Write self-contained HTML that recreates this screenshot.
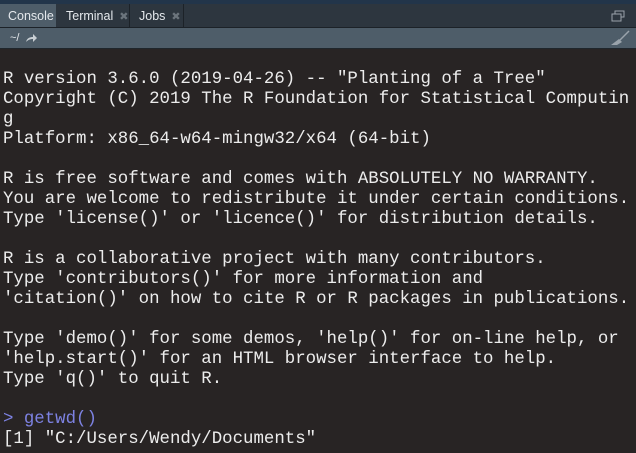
<!DOCTYPE html>
<html><head><style>
body{margin:0;width:636px;height:453px;overflow:hidden;background:#282424;font-family:"Liberation Sans",sans-serif}
.top{position:absolute;left:0;top:0;width:636px;height:4px;background:#22354a}
.tabs{position:absolute;left:0;top:4px;width:636px;height:23px;background:#2d363f;border-bottom:1px solid #1c2228}
.tab{position:absolute;top:0;height:23px;font-size:12.5px;color:#e4e8ec;line-height:24px;padding-left:8px;box-sizing:border-box;border-right:1px solid #1c2228}
.x{color:#6b747c;font-size:11px;margin-left:6px}
.bar{position:absolute;left:0;top:28px;width:636px;height:20px;background:#4e5d69;border-bottom:1px solid #1f262c}
.con{position:absolute;left:3px;top:70px;margin:0;font-family:"Liberation Mono",monospace;font-size:17.4px;line-height:20px;color:#ececec;white-space:pre}
.p{color:#7d82e2}
</style></head><body>
<div class="top"></div>
<div class="tabs">
<div class="tab" style="left:0;width:56px;background:#4e5d69;border-right:none">Console</div>
<div class="tab" style="left:57px;width:73px;padding-left:9px">Terminal<span class="x">✖</span></div>
<div class="tab" style="left:130px;width:54px;padding-left:9px">Jobs<span class="x">✖</span></div>
<svg style="position:absolute;left:611px;top:6px" width="14" height="12"><rect x="4" y="1" width="9" height="6" fill="none" stroke="#9aa3ab"/><rect x="1" y="4" width="9" height="7" fill="#2d363f" stroke="#9aa3ab"/></svg>
</div>
<div class="bar">
<span style="position:absolute;left:10px;top:4px;font-size:11px;color:#e4e8ec">~/</span>
<svg style="position:absolute;left:25px;top:5px" width="12" height="10"><path d="M1 9 C2 5 5 4 8 4 L8 1 L12 5 L8 9 L8 6 C5 6 3 7 1 9Z" fill="#c9cfd4"/></svg>
<svg style="position:absolute;left:610px;top:2px" width="20" height="16"><path d="M19 1 L10 10" stroke="#9aa3ab" stroke-width="1.5"/><path d="M9 9 L12 12 L7 15 L1 15 Z" fill="#9aa3ab"/></svg>
</div>
<pre class="con">R version 3.6.0 (2019-04-26) -- "Planting of a Tree"
Copyright (C) 2019 The R Foundation for Statistical Computin
g
Platform: x86_64-w64-mingw32/x64 (64-bit)

R is free software and comes with ABSOLUTELY NO WARRANTY.
You are welcome to redistribute it under certain conditions.
Type 'license()' or 'licence()' for distribution details.

R is a collaborative project with many contributors.
Type 'contributors()' for more information and
'citation()' on how to cite R or R packages in publications.

Type 'demo()' for some demos, 'help()' for on-line help, or
'help.start()' for an HTML browser interface to help.
Type 'q()' to quit R.

<span class="p">&gt; getwd()</span>
[1] "C:/Users/Wendy/Documents"</pre>
</body></html>
